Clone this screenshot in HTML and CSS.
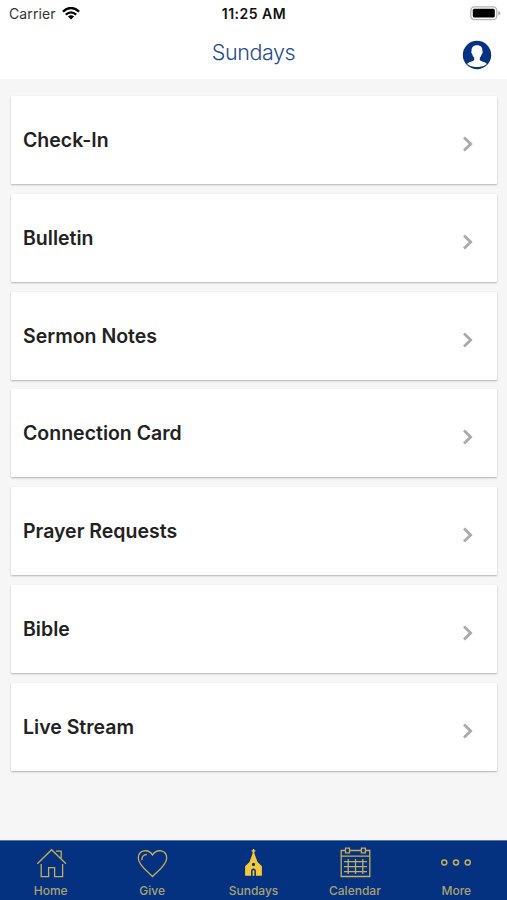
FILE: index.html
```html
<!DOCTYPE html>
<html lang="en">
<head>
<meta charset="utf-8">
<title>Sundays</title>
<link rel="stylesheet" href="styles.css">
</head>
<body>
<header class="top">
  <div class="status">
    <div class="carrier"><span>Carrier</span>
      <svg class="wifi" width="18" height="13" viewBox="0 0 18 13" fill="none" stroke="#000" stroke-width="2.3"><path d="M.9 4.6Q9-2.7 17.1 4.6M3.8 7.7Q9 3.1 14.2 7.7"/><path d="M9 12.5 5.9 9.6Q9 7.1 12.1 9.6Z" fill="#000" stroke="none"/></svg>
    </div>
    <div class="time">11:25 AM</div>
    <svg class="battery" width="31" height="15" viewBox="0 0 31 15"><rect x=".8" y=".8" width="26" height="12.8" rx="3.6" fill="#fff" stroke="#b5b5b5" stroke-width="1.3"/><rect x="2.8" y="2.8" width="22" height="8.8" rx="1.5"/><path d="M28.4 5q2 .6 2 2.2t-2 2.2z" fill="#aaa"/></svg>
  </div>
  <div class="nav">
    <h1>Sundays</h1>
    <svg class="profile" width="30" height="30" viewBox="0 0 30 30"><circle cx="15" cy="15" r="14.2" fill="#063381"/><path d="M15 5.2c-3.7 0-5.6 2.2-5.4 5.4 0 .8-.5 1.1-.2 2.2.2.8.6 1 .9 1.5.3 1.5 1 2.5 1.900 3.300v2.200c-1 2-5.100 1.700-7.200 4.200A13 13 0 0 0 15 27a13 13 0 0 0 10-3c-2.100-2.500-6.200-2.200-7.200-4.200v-2.200c.9-.8 1.600-1.800 1.900-3.300.3-.5.7-.7.9-1.500.3-1.100-.2-1.400-.2-2.200.2-3.200-1.700-5.400-5.400-5.400z" fill="#fff"/></svg>
  </div>
</header>
<main class="list">
  <a class="card"><span>Check-In</span><svg class="chevron" width="12" height="18" viewBox="0 0 12 18"><path d="M2 2.500 8.700 9 2 15.500"/></svg></a>
  <a class="card"><span>Bulletin</span><svg class="chevron" width="12" height="18" viewBox="0 0 12 18"><path d="M2 2.500 8.700 9 2 15.500"/></svg></a>
  <a class="card"><span>Sermon Notes</span><svg class="chevron" width="12" height="18" viewBox="0 0 12 18"><path d="M2 2.500 8.700 9 2 15.500"/></svg></a>
  <a class="card"><span>Connection Card</span><svg class="chevron" width="12" height="18" viewBox="0 0 12 18"><path d="M2 2.500 8.700 9 2 15.500"/></svg></a>
  <a class="card"><span>Prayer Requests</span><svg class="chevron" width="12" height="18" viewBox="0 0 12 18"><path d="M2 2.500 8.700 9 2 15.500"/></svg></a>
  <a class="card"><span>Bible</span><svg class="chevron" width="12" height="18" viewBox="0 0 12 18"><path d="M2 2.500 8.700 9 2 15.500"/></svg></a>
  <a class="card"><span>Live Stream</span><svg class="chevron" width="12" height="18" viewBox="0 0 12 18"><path d="M2 2.500 8.700 9 2 15.500"/></svg></a>
</main>
<nav class="tabs">
  <a class="tab"><svg width="32" height="32" viewBox="0 0 32 32"><path d="M2.300 16.700 16.600 2.700 31 16.700M21 4.200h5.200v7M6.200 17v12.600h7.400V20.700h6v8.900h8V17"/></svg><span>Home</span></a>
  <a class="tab"><svg width="32" height="32" viewBox="0 0 32 32"><path d="M16.500 29.500C13 25.700 2.300 18.500 2.300 11 2.300 3.500 12 .8 16.500 8 21 .8 30.700 3.500 30.700 11c0 7.500-10.700 14.700-14.200 18.500zM6 13.200C5.500 9.700 7.500 7.600 10.800 7.500"/></svg><span>Give</span></a>
  <a class="tab active"><svg width="32" height="32" viewBox="0 0 32 32"><path fill-rule="evenodd" d="M15.800 2h1.400v1.200h1.200v1.300h-1v2l3.100 8.500 4.400 4.300v9.500h-6v-5q0-2.200-2.400-2.200t-2.400 2.200v5h-6v-9.500l4.400-4.300 3.100-8.500v-2h-1V3.200h1.200zM16.500 15.800a1.600 1.600 0 1 0 0 3.200 1.600 1.600 0 0 0 0-3.200z"/><path d="M15.600 23.300h1.800v5.500h-1.800z"/></svg><span>Sundays</span></a>
  <a class="tab"><svg width="32" height="32" viewBox="0 0 32 32"><path d="M6.300 3.500H2.200v26h28.600v-26h-4.100M10.700 3.500h11.600M2.200 9.200h28.600M6.500 1.200h4v4.600h-4zM22.400 1.200h4v4.600h-4zM5 14.700h23M5 19.600h23M5 24.600h23M9.200 12v15M16.500 12v15M23.800 12v15"/></svg><span>Calendar</span></a>
  <a class="tab"><svg width="32" height="32" viewBox="0 0 32 32"><g stroke-width="1.500"><circle cx="4.300" cy="15.400" r="2.500"/><circle cx="16" cy="15.400" r="2.500"/><circle cx="27.700" cy="15.400" r="2.500"/></g></svg><span>More</span></a>
</nav>
</body>
</html>
```
FILE: styles.css
```css
* { box-sizing: border-box; }
body {
  margin: 0;
  height: 900px;
  display: flex;
  flex-direction: column;
  background: #f6f6f6;
  color: #222;
  font-family: Inter, "Liberation Sans", sans-serif;
  overflow: hidden;
}
svg { display: block; flex: none; }
.top { height: 78.5px; background: #fff; }
.status {
  height: 27px;
  display: grid;
  grid-template-columns: 1fr auto 1fr;
  align-items: center;
  padding: 0 6px 0 9px;
  font-size: 14px;
  line-height: 27px;
  color: #111;
}
.carrier { display: flex; align-items: center; gap: 6px; color: #333; letter-spacing: .1px; }
.time { font-weight: 600; font-size: 14px; letter-spacing: .5px; margin-right: 2px; }
.battery { justify-self: end; }
.nav {
  height: 51px;
  display: grid;
  grid-template-columns: 1fr auto 1fr;
  align-items: center;
  padding: 0 15px;
}
.nav h1 {
  grid-column: 2;
  margin: 0;
  font-size: 21.5px;
  font-weight: 300;
  letter-spacing: -.4px;
  line-height: 51px;
  color: #1e4a92;
}
.profile { justify-self: end; margin-top: 4px; }
.list {
  flex: 1;
  display: flex;
  flex-direction: column;
  gap: 9.75px;
  padding: 17.6px 10px 0 11px;
}
.card {
  height: 88px;
  display: flex;
  justify-content: space-between;
  align-items: center;
  padding: 0 23px 0 12px;
  background: #fff;
  border-radius: 1px;
  box-shadow: 0 1px 2px rgba(0, 0, 0, .28);
  font-size: 19.5px;
  font-weight: 600;
}
.chevron { margin-top: 8px; fill: none; stroke: #aaa; stroke-width: 2.8; }
.tabs {
  height: 60.5px;
  display: grid;
  grid-template-columns: repeat(5, 1fr);
  background: #043180;
  border-top: 1px solid #547aa4;
}
.tab {
  display: flex;
  flex-direction: column;
  align-items: center;
  padding-top: 6.5px;
  color: #a9a372;
  font-size: 12px;
  font-weight: 500;
}
.tab svg { fill: none; stroke: #c5ae58; stroke-width: 1.3; }
.tab.active svg { fill: #f5c93b; stroke: none; }
.tab span { line-height: 16px; margin-top: 4px; }
```
